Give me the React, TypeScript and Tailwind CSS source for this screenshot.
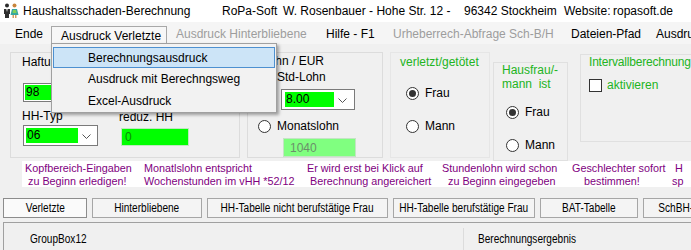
import React from 'react';

const SANS = "font-['Liberation_Sans',Arial,sans-serif]";

function PeopleIcon() {
  return (
    <svg width="16" height="16" viewBox="0 0 16 16" className="ml-[3px] shrink-0">
      <circle cx="4" cy="2.6" r="2" fill="#2a2a2a" />
      <path d="M1 6 L7 6 L7 11 L6 11 L6 15 L2 15 L2 11 L1 11 Z" fill="#2f2f2f" />
      <path d="M3.3 6 L4.7 6 L4 9 Z" fill="#ffffff" />
      <circle cx="11.5" cy="2.6" r="2" fill="#c8843c" />
      <path d="M9 6 L14 6 L15.5 12 L7.5 12 Z" fill="#35a7a0" />
      <path d="M10 7 L13 7 L13.6 10 L9.6 10 Z" fill="#7fcf5a" />
      <rect x="9.6" y="12" width="1.2" height="3" fill="#c8843c" />
      <rect x="12.2" y="12" width="1.2" height="3" fill="#c8843c" />
    </svg>
  );
}

function Radio({ checked = false }: { checked?: boolean }) {
  return (
    <span className="flex h-[13px] w-[13px] shrink-0 items-center justify-center rounded-full border border-[#333] bg-white">
      {checked && <span className="h-[7px] w-[7px] rounded-full bg-[#333]" />}
    </span>
  );
}

function Chevron() {
  return (
    <svg width="9" height="5" viewBox="0 0 9 5">
      <polyline points="0.5,0.5 4.5,4.5 8.5,0.5" fill="none" stroke="#555" strokeWidth="1" />
    </svg>
  );
}

// narrow (Arial Narrow look) label, squeezed from Liberation Sans
function Narrow({ children, left = false }: { children: React.ReactNode; left?: boolean }) {
  return (
    <span className={`inline-block scale-x-[0.84] whitespace-nowrap ${left ? 'origin-left' : 'origin-center'}`}>
      {children}
    </span>
  );
}

const hints: string[][] = [
  ['Kopfbereich-Eingaben', ' zu Beginn erledigen!'],
  ['Monatlslohn entspricht', 'Wochenstunden im vHH *52/12'],
  ['Er wird erst bei Klick auf', ' Berechnung angereichert'],
  ['Stundenlohn wird schon', '  zu Beginn eingegeben'],
  ['Geschlechter sofort', '    bestimmen!'],
  [' H', 'sp'],
];
const hintWidths = ['w-[119px]', 'w-[163px]', 'w-[135px]', 'w-[130px]', 'w-[100px]', 'w-[40px]'];

const tabs = [
  { label: 'Verletzte', w: 'w-[84px]', active: true },
  { label: 'Hinterbliebene', w: 'w-[110px]', active: false },
  { label: 'HH-Tabelle nicht berufstätige Frau', w: 'w-[181px]', active: false },
  { label: 'HH-Tabelle berufstätige Frau', w: 'w-[142px]', active: false },
  { label: 'BAT-Tabelle', w: 'w-[98px]', active: false },
  { label: 'SchBH-Tabelle', w: 'w-[98px]', active: false },
];

export default function App() {
  return (
    <div className={`relative h-[250px] w-[691px] overflow-hidden bg-[#f0f0f0] text-[12px] leading-[14px] text-black ${SANS}`}>
      {/* title line */}
      <div className="flex h-[22px] items-center whitespace-nowrap bg-white">
        <div className="flex w-[222px] shrink-0 items-center">
          <PeopleIcon />
          <span className="ml-[4px]">Haushaltsschaden-Berechnung</span>
        </div>
        <span className="w-[61px] shrink-0">RoPa-Soft</span>
        <span className="w-[181px] shrink-0">W. Rosenbauer - Hohe Str. 12 -</span>
        <span className="w-[100px] shrink-0">96342 Stockheim</span>
        <span className="w-[49px] shrink-0">Website:</span>
        <span className="shrink-0">ropasoft.de</span>
      </div>

      {/* menu bar */}
      <div className="flex h-[22px] items-end whitespace-nowrap bg-[#f5f5f5]">
        <div className="flex h-[22px] w-[51px] shrink-0 items-center pl-[15px] pt-[2px]">Ende</div>
        <div className="flex h-[18px] w-[116px] shrink-0 items-center border border-b-0 border-[#a8a8a8] bg-[#f7f7f7] pl-[9px]">
          Ausdruck Verletzte
        </div>
        <div className="flex h-[22px] w-[150px] shrink-0 items-center pl-[9px] pt-[2px] text-[#9d9d9d]">Ausdruck Hinterbliebene</div>
        <div className="flex h-[22px] w-[67px] shrink-0 items-center pl-[9px] pt-[2px]">Hilfe - F1</div>
        <div className="flex h-[22px] w-[178px] shrink-0 items-center pl-[9px] pt-[2px] text-[#9d9d9d]">Urheberrech-Abfrage Sch-B/H</div>
        <div className="flex h-[22px] w-[85px] shrink-0 items-center pl-[9px] pt-[2px]">Dateien-Pfad</div>
        <div className="flex h-[22px] shrink-0 items-center pl-[9px] pt-[2px]">Ausdruck</div>
      </div>

      {/* upper form area */}
      <div className="flex h-[117px] items-start whitespace-nowrap">
        {/* group 1 */}
        <div className="ml-[10px] mt-[8px] flex h-[106px] w-[230px] shrink-0 border border-[#dcdcdc]">
          <div className="flex w-[108px] shrink-0 flex-col pl-[11px]">
            <span className="mt-[2px]">Haftungsquote %</span>
            <div className="ml-[1px] mt-[14px] flex h-[19px] w-[84px] border border-[#7a7a7a] bg-white p-[1px]">
              <div className="flex-1 bg-[#00ff00] pl-[1px] leading-[15px]">98</div>
            </div>
            <span className="mt-[7px]">HH-Typ</span>
            <div className="ml-[1px] mt-[2px] flex h-[21px] w-[75px] items-center border border-[#7a7a7a] bg-white p-[2px]">
              <div className="h-full w-[52px] bg-[#00ff00] pl-[1px] leading-[15px]">06</div>
              <div className="flex flex-1 justify-center pt-[1px]">
                <Chevron />
              </div>
            </div>
          </div>
          <div className="flex flex-col">
            <span className="mt-[57px]">reduz. HH</span>
            <div className="ml-[2px] mt-[4px] flex h-[18px] w-[68px] border border-[#bfe8bf] bg-[#00ff00] pl-[3px] leading-[16px] text-[#0a8a0a]">
              0
            </div>
          </div>
        </div>

        {/* group 2 */}
        <div className="ml-[7px] mt-[8px] flex h-[106px] w-[136px] shrink-0 flex-col border border-[#dcdcdc] pl-[10px]">
          <span className="ml-[4px] mt-[1px]">Lohn / EUR</span>
          <div className="mt-[2px] flex h-[14px] items-center gap-[6px]">
            <Radio checked />
            <span>Std-Lohn</span>
          </div>
          <div className="ml-[23px] mt-[5px] flex h-[21px] w-[74px] items-center border border-[#7a7a7a] bg-white px-[3px] py-[2px]">
            <div className="h-full w-[49px] bg-[#00ff00] pl-[1px] leading-[15px]">8.00</div>
            <div className="flex flex-1 justify-center pt-[1px]">
              <Chevron />
            </div>
          </div>
          <div className="mt-[9px] flex h-[14px] items-center gap-[6px]">
            <Radio />
            <span>Monatslohn</span>
          </div>
          <div className="ml-[25px] mt-[5px] flex h-[19px] w-[73px] items-center border border-[#c4e4c4] bg-[#80ff80] pl-[6px] text-[#6b8f6b]">
            1040
          </div>
        </div>

        {/* group 3 */}
        <div className="ml-[7px] mt-[8px] flex h-[106px] w-[100px] shrink-0 flex-col border border-[#e6e6e6] pl-[9px]">
          <span className="mt-[2px] text-[#22b422]">verletzt/getötet</span>
          <div className="ml-[6px] mt-[17px] flex h-[14px] items-center gap-[6px]">
            <Radio checked />
            <span>Frau</span>
          </div>
          <div className="ml-[6px] mt-[19px] flex h-[14px] items-center gap-[6px]">
            <Radio />
            <span>Mann</span>
          </div>
        </div>

        {/* group 4 */}
        <div className="ml-[3px] mt-[18px] flex h-[99px] w-[75px] shrink-0 flex-col border border-[#e0e0e0] pl-[8px]">
          <span className="text-[#22b422]">Hausfrau/-</span>
          <span className="text-[#22b422]">mann&nbsp; ist</span>
          <div className="ml-[4px] mt-[14px] flex h-[14px] items-center gap-[6px]">
            <Radio checked />
            <span>Frau</span>
          </div>
          <div className="ml-[4px] mt-[19px] flex h-[14px] items-center gap-[6px]">
            <Radio />
            <span>Mann</span>
          </div>
        </div>

        {/* group 5 */}
        <div className="ml-[12px] mt-[10px] flex h-[88px] w-[130px] shrink-0 flex-col border border-[#e0e0e0] pl-[8px]">
          <span className="tracking-[-0.2px] text-[#22b422]">Intervallberechnung</span>
          <div className="mt-[9px] flex items-center gap-[5px]">
            <span className="h-[13px] w-[13px] border border-[#333] bg-white" />
            <span className="text-[#22b422]">aktivieren</span>
          </div>
        </div>
      </div>

      {/* hints */}
      <div className="ml-[22px] flex h-[26px] bg-white pl-[3px] pt-[1px] text-[10.8px] leading-[13px] text-[#800080]">
        {hints.map((h, i) => (
          <div key={i} className={`${hintWidths[i]} shrink-0 whitespace-pre`}>
            <div>{h[0]}</div>
            <div>{h[1]}</div>
          </div>
        ))}
      </div>

      {/* tab buttons */}
      <div className="ml-[3px] mt-[11px] flex h-[20px] gap-[5px] whitespace-nowrap">
        {tabs.map((t) => (
          <div
            key={t.label}
            className={`${t.w} flex shrink-0 items-center justify-center border ${
              t.active ? 'border-[#8c8c8c] bg-[#fafafa]' : 'border-[#a6a6a6] bg-[#f4f4f4]'
            }`}
          >
            <Narrow>{t.label}</Narrow>
          </div>
        ))}
      </div>

      {/* bottom panel */}
      <div className="ml-[3px] mt-[4px] flex h-[40px] border-l border-t border-[#a0a0a0]">
        <div className="ml-[10px] mt-[5px] flex h-[40px] w-[450px] shrink-0 flex-col border-r border-[#dcdcdc] pl-[16px]">
          <span className="mt-[4px]">
            <Narrow left>GroupBox12</Narrow>
          </span>
          <div className="ml-[218px] mt-[4px] h-[10px] w-[72px] border border-[#c8c8c8] bg-white" />
        </div>
        <div className="ml-[14px] flex shrink-0 flex-col pt-[9px]">
          <span>
            <Narrow left>Berechnungsergebnis</Narrow>
          </span>
          <div className="ml-[12px] mt-[4px] h-[10px] w-[200px] border border-[#c8c8c8] bg-white" />
        </div>
      </div>

      {/* open dropdown of "Ausdruck Verletzte" */}
      <div className="absolute left-[51px] top-[43px] flex h-[70px] w-[226px] flex-col border border-[#a0a0a0] bg-[#f2f2f2] px-[1px] pt-[3px] shadow-[2px_2px_3px_rgba(0,0,0,0.35)]">
        <div className="flex h-[21px] items-center border border-[#4d90d0] bg-[#cce4f7] pl-[34px]">Berechnungsausdruck</div>
        <div className="flex h-[22px] items-center pl-[35px]">Ausdruck mit Berechngsweg</div>
        <div className="flex h-[22px] items-center pl-[35px]">Excel-Ausdruck</div>
      </div>
    </div>
  );
}
